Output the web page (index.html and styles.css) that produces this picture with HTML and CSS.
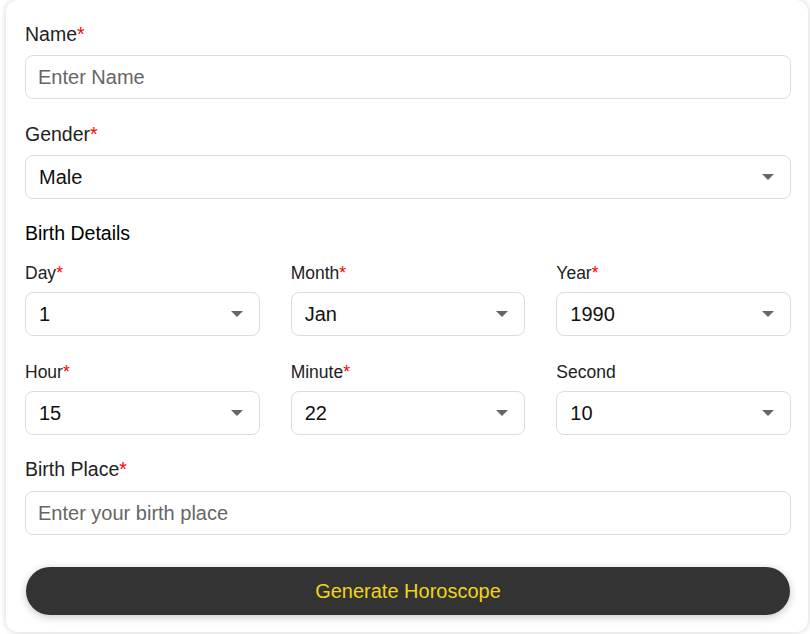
FILE: index.html
```html
<!DOCTYPE html>
<html lang="en">
<head>
<meta charset="utf-8">
<title>Horoscope Form</title>
<link rel="stylesheet" href="styles.css">
</head>
<body>
<form class="card">
  <div class="group">
    <label class="label" for="name">Name<span class="req">*</span></label>
    <input class="field" id="name" type="text" placeholder="Enter Name">
  </div>
  <div class="group">
    <label class="label" for="gender">Gender<span class="req">*</span></label>
    <div class="select-wrap">
      <select class="field select" id="gender"><option>Male</option><option>Female</option></select>
      <svg class="arrow" width="12" height="6" viewBox="0 0 12 6"><path d="M0 0h12L6 6z" fill="#666"/></svg>
    </div>
  </div>
  <div class="section-title">Birth Details</div>
  <div class="grid">
    <div class="cell">
      <label class="label small">Day<span class="req">*</span></label>
      <div class="select-wrap">
        <select class="field select"><option>1</option></select>
        <svg class="arrow" width="12" height="6" viewBox="0 0 12 6"><path d="M0 0h12L6 6z" fill="#666"/></svg>
      </div>
    </div>
    <div class="cell">
      <label class="label small">Month<span class="req">*</span></label>
      <div class="select-wrap">
        <select class="field select"><option>Jan</option></select>
        <svg class="arrow" width="12" height="6" viewBox="0 0 12 6"><path d="M0 0h12L6 6z" fill="#666"/></svg>
      </div>
    </div>
    <div class="cell">
      <label class="label small">Year<span class="req">*</span></label>
      <div class="select-wrap">
        <select class="field select"><option>1990</option></select>
        <svg class="arrow" width="12" height="6" viewBox="0 0 12 6"><path d="M0 0h12L6 6z" fill="#666"/></svg>
      </div>
    </div>
    <div class="cell">
      <label class="label small">Hour<span class="req">*</span></label>
      <div class="select-wrap">
        <select class="field select"><option>15</option></select>
        <svg class="arrow" width="12" height="6" viewBox="0 0 12 6"><path d="M0 0h12L6 6z" fill="#666"/></svg>
      </div>
    </div>
    <div class="cell">
      <label class="label small">Minute<span class="req">*</span></label>
      <div class="select-wrap">
        <select class="field select"><option>22</option></select>
        <svg class="arrow" width="12" height="6" viewBox="0 0 12 6"><path d="M0 0h12L6 6z" fill="#666"/></svg>
      </div>
    </div>
    <div class="cell">
      <label class="label small">Second</label>
      <div class="select-wrap">
        <select class="field select"><option>10</option></select>
        <svg class="arrow" width="12" height="6" viewBox="0 0 12 6"><path d="M0 0h12L6 6z" fill="#666"/></svg>
      </div>
    </div>
  </div>
  <div class="group place">
    <label class="label" for="place">Birth Place<span class="req">*</span></label>
    <input class="field" id="place" type="text" placeholder="Enter your birth place">
  </div>
  <button class="btn" type="button">Generate Horoscope</button>
</form>
</body>
</html>
```
FILE: styles.css
```css
* { box-sizing: border-box; }
html, body { margin: 0; padding: 0; background: #fff; }
body {
  font-family: "Liberation Sans", Arial, sans-serif;
  color: #222;
  overflow: hidden;
  height: 634px;
}
.card {
  margin: 0 2px 0 6px;
  height: 632px;
  background: #fff;
  border-radius: 12px;
  box-shadow: 0 0 6px rgba(0,0,0,0.18);
  padding: 22px 17px 0 19px;
}
.group { display: flex; flex-direction: column; margin-bottom: 23px; }
.label {
  display: block;
  font-size: 19.5px;
  line-height: 22px;
  padding-top: 1px;
  color: #222;
  margin-bottom: 10px;
}
.label.small { font-size: 17.5px; line-height: 19px; padding-top: 2px; margin-bottom: 9px; }
.req { color: #f00; }
.field {
  width: 100%;
  height: 44px;
  border: 1px solid #ddd;
  border-radius: 8px;
  background: #fff;
  font-family: inherit;
  font-size: 20px;
  color: #111;
  padding: 0 12px;
  outline: none;
}
.field::placeholder { color: #666; }
.select-wrap { position: relative; }
.select { appearance: none; -webkit-appearance: none; display: block; padding-left: 13px; }
.arrow { position: absolute; right: 17px; top: 19px; pointer-events: none; }
.section-title {
  font-size: 19.5px;
  line-height: 22px;
  color: #000;
  margin-bottom: 18px;
}
.grid {
  display: grid;
  grid-template-columns: repeat(3, 1fr);
  column-gap: 31px;
  row-gap: 25px;
  margin-bottom: 22px;
}
.place .label { margin-bottom: 11px; }
.place { margin-bottom: 32px; }
.btn {
  display: block;
  width: calc(100% - 2px);
  margin-left: 1px;
  height: 48px;
  border: none;
  border-radius: 24px;
  background: #333;
  color: #f2d31b;
  font-family: inherit;
  font-size: 20px;
  box-shadow: 0 2px 8px rgba(0,0,0,0.22);
  cursor: pointer;
}
```
